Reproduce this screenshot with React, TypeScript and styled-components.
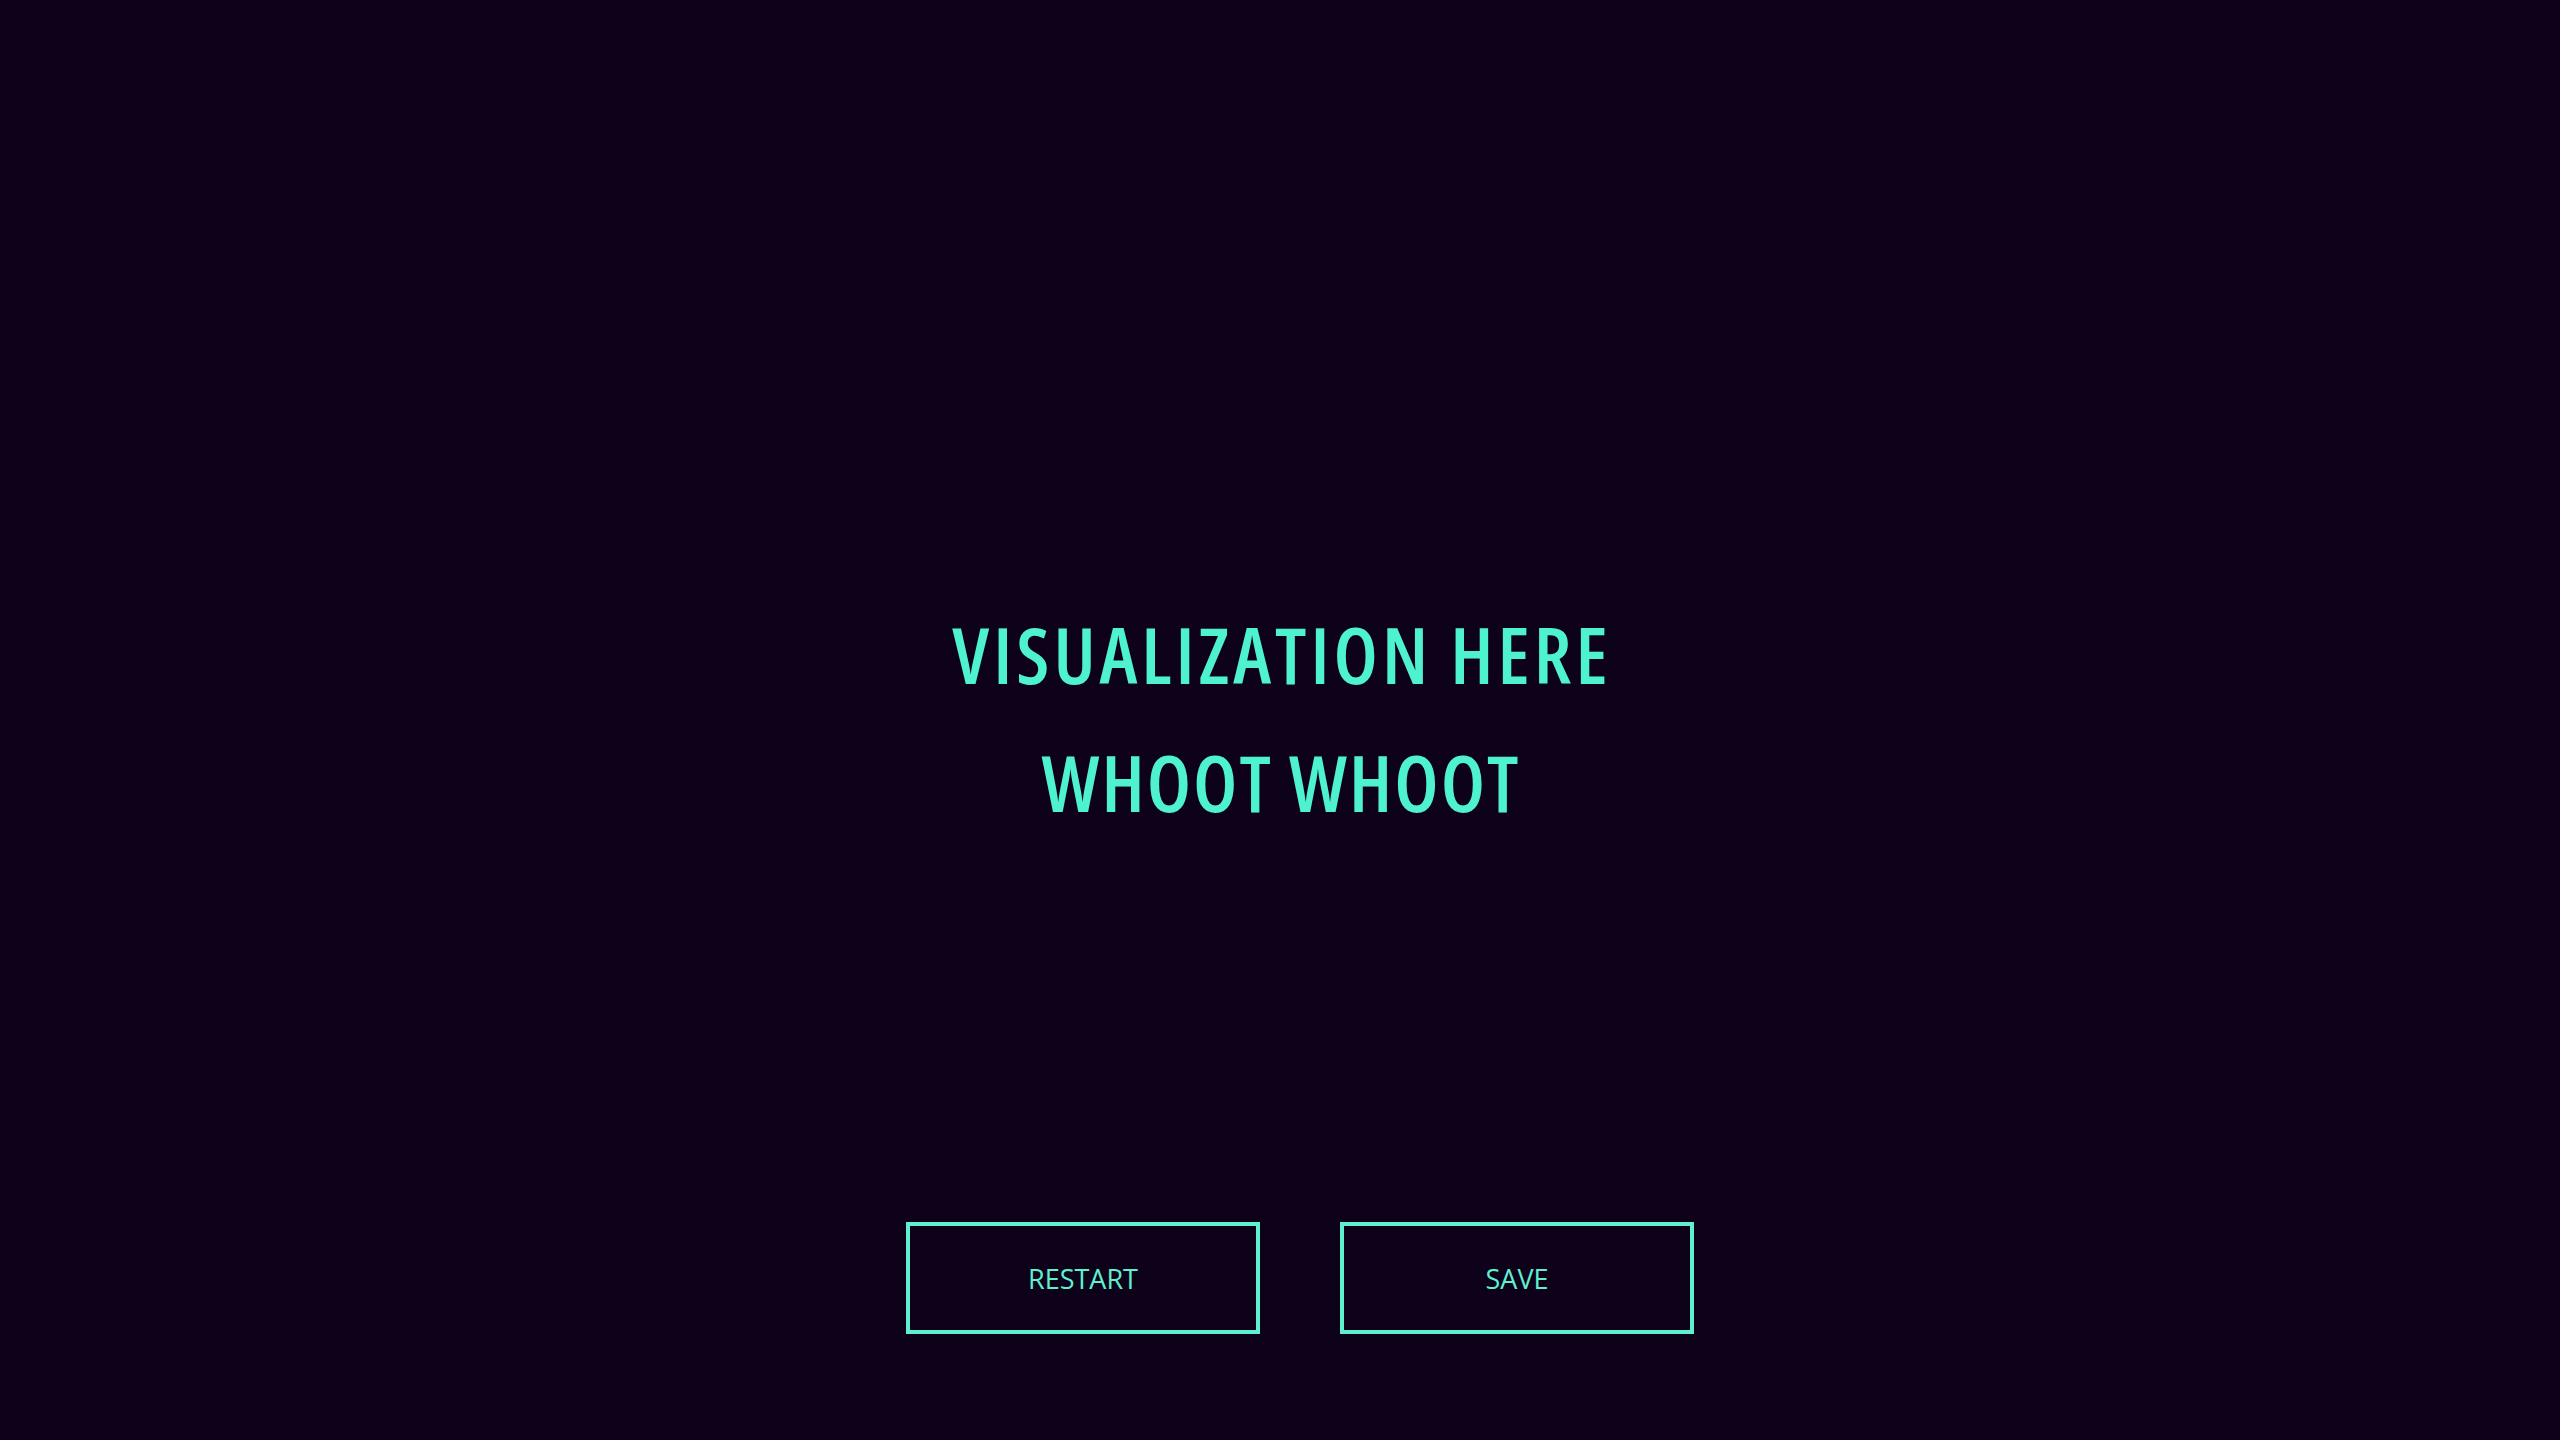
import React from "react";
import styled, { createGlobalStyle } from "styled-components";

const GlobalStyle = createGlobalStyle`
  html, body {
    margin: 0;
    padding: 0;
    background: #0e011a;
  }
  body {
    font-family: "Open Sans", "DejaVu Sans Condensed", sans-serif;
  }
`;

const Page = styled.div`
  min-height: 100vh;
  background: #0e011a;
  display: flex;
  flex-direction: column;
  align-items: center;
  box-sizing: border-box;
  padding-top: 590px;
`;

const Visual = styled.div`
  display: flex;
  flex-direction: column;
  align-items: center;
`;

const Title = styled.div<{ $spacing: number }>`
  color: #4ef2cf;
  font-family: "Open Sans", "DejaVu Sans Condensed", sans-serif;
  font-stretch: 75%;
  font-size: 78px;
  line-height: 128px;
  font-weight: 600;
  letter-spacing: ${(p) => p.$spacing}px;
  text-indent: ${(p) => p.$spacing}px;
  text-align: center;
  white-space: nowrap;
`;

const Controls = styled.div`
  margin-top: 376px;
  display: flex;
  gap: 80px;
  padding-left: 40px;
`;

const Button = styled.button`
  width: 354px;
  height: 112px;
  box-sizing: border-box;
  border: 4px solid #5ff0d0;
  background: transparent;
  color: #5ff0d0;
  font-family: "Open Sans", "DejaVu Sans Condensed", sans-serif;
  font-weight: 500;
  font-size: 27px;
  padding: 0;
  cursor: pointer;
  display: flex;
  align-items: center;
  justify-content: center;
`;

export default function App() {
  return (
    <>
      <GlobalStyle />
      <Page>
        <Visual>
          <Title $spacing={4}>VISUALIZATION HERE</Title>
          <Title $spacing={2}>WHOOT WHOOT</Title>
        </Visual>
        <Controls>
          <Button>RESTART</Button>
          <Button>SAVE</Button>
        </Controls>
      </Page>
    </>
  );
}
